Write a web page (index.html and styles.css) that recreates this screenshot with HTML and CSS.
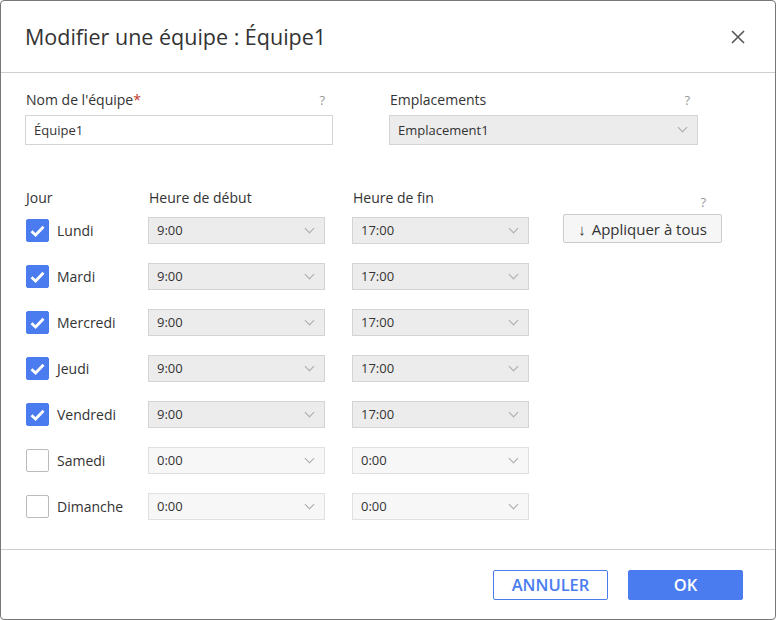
FILE: index.html
```html
<!DOCTYPE html>
<html lang="fr">
<head>
    <meta charset="UTF-8">
    <title>Modifier une équipe</title>
    <link rel="stylesheet" href="styles.css">
</head>
<body>

<div class="dialog">
    <div class="dialog-header">
        <h1>Modifier une équipe : Équipe1</h1>
        <button class="close-btn" aria-label="Fermer">
            <svg width="14" height="14" viewBox="0 0 14 14"><path d="M1 1L13 13M13 1L1 13" stroke="#555" stroke-width="1.6" fill="none"/></svg>
        </button>
    </div>

    <div class="dialog-body">
        <div class="top-fields">
            <div class="field">
                <div class="field-label"><span>Nom de l'équipe<span class="req">*</span></span><span class="help">?</span></div>
                <input class="text-input" type="text" value="Équipe1">
            </div>
            <div class="field">
                <div class="field-label"><span>Emplacements</span><span class="help">?</span></div>
                <div class="select select-lg">Emplacement1<span class="chev"></span></div>
            </div>
        </div>

        <div class="schedule" id="schedule">
            <div class="col-head">Jour</div>
            <div class="col-head">Heure de début</div>
            <div class="col-head">Heure de fin</div>
            <div class="col-head help-cell"><span class="help">?</span></div>
        </div>
    </div>

    <div class="dialog-footer">
        <button class="btn btn-outline">ANNULER</button>
        <button class="btn btn-primary">OK</button>
    </div>
</div>

<script>
// jours de la semaine
const days = [
    { name: "Lundi", on: true },
    { name: "Mardi", on: true },
    { name: "Mercredi", on: true },
    { name: "Jeudi", on: true },
    { name: "Vendredi", on: true },
    { name: "Samedi", on: false },
    { name: "Dimanche", on: false }
];

const check = '<svg width="15" height="12" viewBox="0 0 15 12"><path d="M1.5 6.2L5.6 10L13.5 1.8" stroke="#fff" stroke-width="2.8" fill="none"/></svg>';

const schedule = document.getElementById("schedule");
let html = "";
days.forEach(function (d, i) {
    const start = d.on ? "9:00" : "0:00";
    const end = d.on ? "17:00" : "0:00";
    const dis = d.on ? "" : " disabled";
    html += `
        <div class="day"><span class="checkbox${d.on ? " checked" : ""}">${d.on ? check : ""}</span>${d.name}</div>
        <div class="select${dis}">${start}<span class="chev"></span></div>
        <div class="select${dis}">${end}<span class="chev"></span></div>
        <div class="apply-cell">${i === 0 ? '<button class="apply-btn"><span class="arrow">↓</span>Appliquer à tous</button>' : ""}</div>
    `;
});
schedule.insertAdjacentHTML("beforeend", html);
</script>

</body>
</html>
```

FILE: styles.css
```css
* {
    box-sizing: border-box;
}
body {
    margin: 0;
    font-family: "Open Sans", "Noto Sans", sans-serif;
    color: #333;
    background-color: #fff;
}
.dialog {
    width: 776px;
    height: 620px;
    border: 1px solid #777;
    border-radius: 4px;
    display: flex;
    flex-direction: column;
    background-color: #fff;
}
.dialog-header {
    height: 72px;
    border-bottom: 1px solid #cfcfcf;
    display: flex;
    align-items: center;
    justify-content: space-between;
    padding: 0 30px 0 24px;
}
.dialog-header h1 {
    margin: 0;
    font-size: 21.5px;
    font-weight: 400;
    color: #333;
}
.close-btn {
    border: none;
    background: none;
    padding: 0;
    width: 14px;
    height: 14px;
    cursor: pointer;
    display: flex;
}
.dialog-body {
    flex: 1;
    padding: 17px 24px 0 24px;
}
.top-fields {
    display: grid;
    grid-template-columns: 308px 309px;
    column-gap: 56px;
}
.field-label {
    display: flex;
    justify-content: space-between;
    font-size: 14px;
    line-height: 20px;
    padding-left: 1px;
    padding-right: 8px;
    margin-bottom: 5px;
}
.req {
    color: #c0392b;
}
.help {
    color: #999;
    font-size: 13px;
}
.text-input {
    width: 100%;
    height: 30px;
    border: 1px solid #d4d4d4;
    padding: 0 8px;
    font-family: inherit;
    font-size: 13px;
    color: #333;
    outline: none;
}
.select {
    position: relative;
    height: 27px;
    background-color: #ececec;
    border: 1px solid #d4d4d4;
    font-size: 13px;
    line-height: 25px;
    padding-left: 8px;
    color: #333;
}
.select-lg {
    height: 30px;
    line-height: 28px;
}
.select.disabled {
    background-color: #f7f7f7;
    border-color: #e0e0e0;
}
.chev {
    position: absolute;
    right: 11px;
    top: 50%;
    width: 7px;
    height: 7px;
    margin-top: -6px;
    border-right: 1px solid #aaa;
    border-bottom: 1px solid #aaa;
    transform: rotate(45deg);
}
.schedule {
    margin-top: 44px;
    display: grid;
    grid-template-columns: 96px 177px 177px 159px;
    grid-template-rows: 9px repeat(7, 27px);
    column-gap: 27px;
    row-gap: 19px;
    align-items: center;
}
.schedule .col-head {
    align-self: start;
    font-size: 14px;
    line-height: 18px;
    height: 18px;
    padding-left: 1px;
}
.help-cell {
    margin-left: 7px;
    text-align: right;
    padding-right: 9px;
    transform: translateY(4px);
}
.day {
    display: flex;
    align-items: center;
    font-size: 14px;
    white-space: nowrap;
    padding-left: 1px;
}
.checkbox {
    flex: none;
    width: 23px;
    height: 23px;
    border: 1px solid #bbb;
    border-radius: 2px;
    margin-right: 8px;
    background-color: #fff;
    display: flex;
    align-items: center;
    justify-content: center;
}
.checkbox.checked {
    background-color: #4a7cf0;
    border-color: #4a7cf0;
}
.apply-cell {
    margin-left: 7px;
}
.apply-btn {
    width: 159px;
    height: 29px;
    margin-top: -6px;
    border: 1px solid #ccc;
    border-radius: 2px;
    background-color: #f6f6f6;
    font-family: inherit;
    font-size: 15px;
    color: #333;
    padding: 0;
}
.apply-btn .arrow {
    margin-right: 6px;
}
.dialog-footer {
    height: 70px;
    border-top: 1px solid #cfcfcf;
    display: flex;
    align-items: center;
    justify-content: flex-end;
    gap: 20px;
    padding-right: 32px;
}
.btn {
    width: 115px;
    height: 30px;
    border-radius: 2px;
    font-family: inherit;
    font-size: 16.5px;
    font-weight: 600;
    padding: 0;
}
.btn-outline {
    background-color: #fff;
    border: 1px solid #4a7cf0;
    color: #4a7cf0;
}
.btn-primary {
    background-color: #4a7cf0;
    border: 1px solid #4a7cf0;
    color: #fff;
}
```
